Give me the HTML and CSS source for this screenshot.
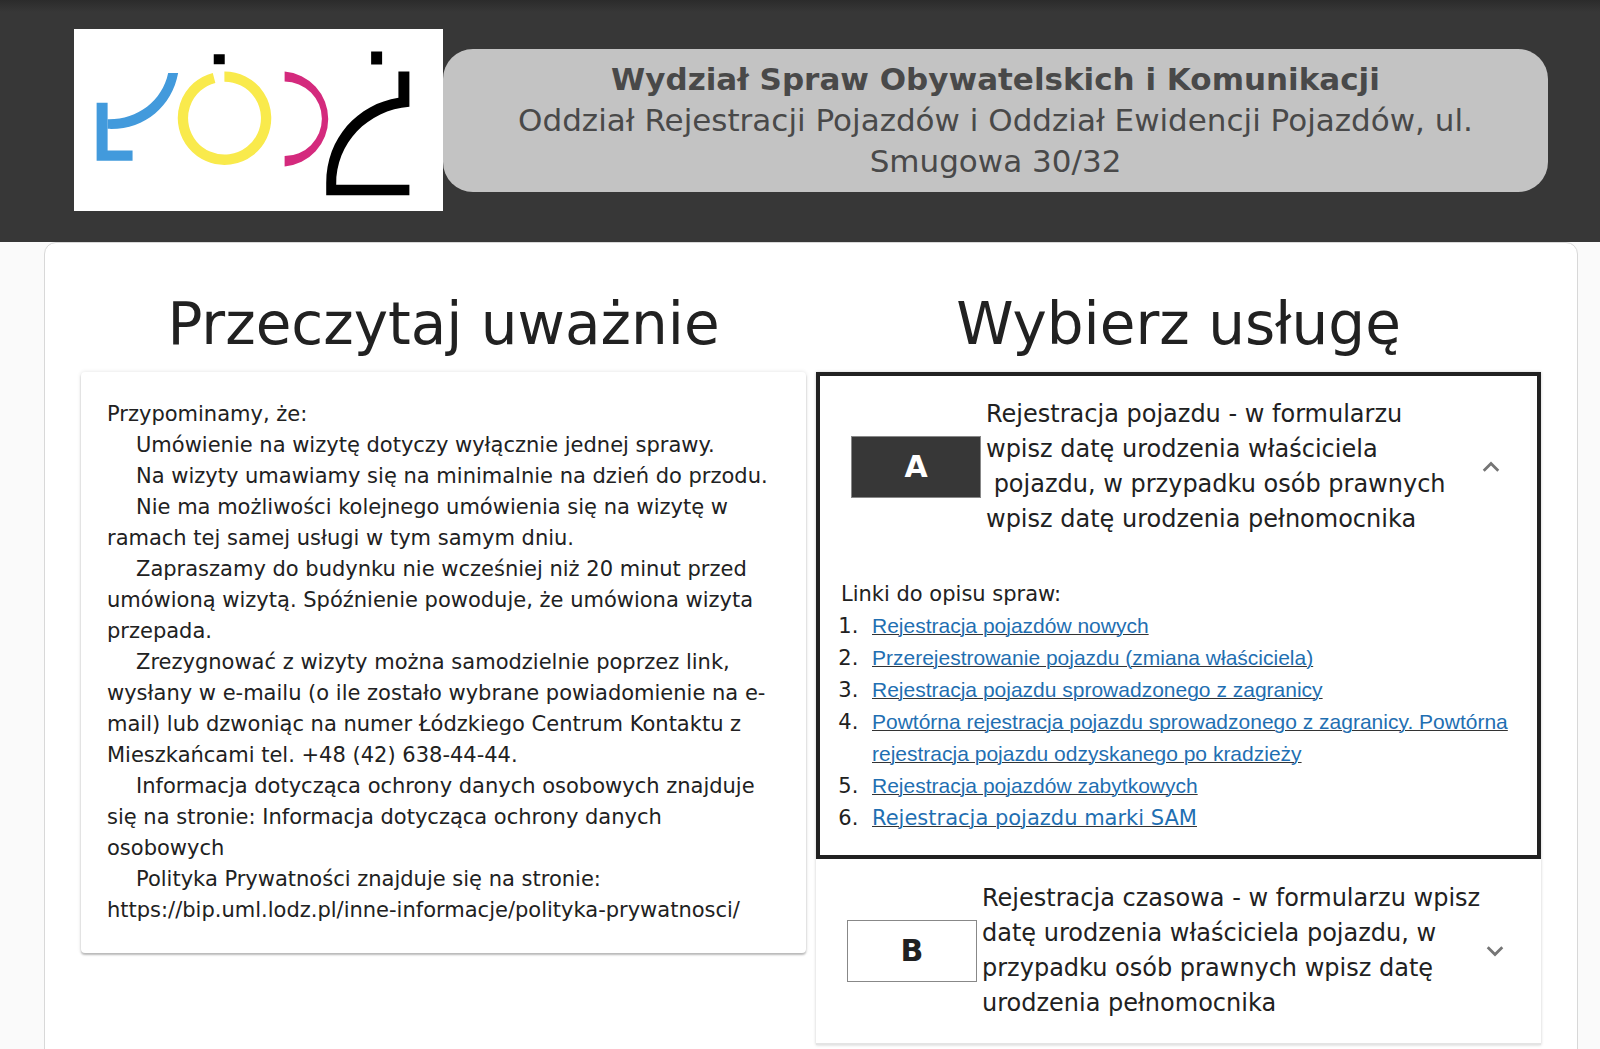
FILE: index.html
```html
<!DOCTYPE html>
<html lang="pl">
<head>
    <meta charset="UTF-8">
    <meta name="viewport" content="width=device-width, initial-scale=1.0">
    <title>Rezerwacja wizyt</title>
    <link rel="stylesheet" href="styles.css">
</head>
<body>
    <header class="header">
        <svg class="logo" viewBox="42 88 1109 545" role="img" aria-label="Łódź">
            <g fill="#429adc">
                <path d="M110 309H143V452H218V483H110Z"/>
                <path d="M143 358C230 360 307 305 325 219H355C336 322 250 392 143 387Z"/>
            </g>
            <path d="M494 230A125 125 0 1 1 463 234" fill="none" stroke="#f9ea4c" stroke-width="31"/>
            <path d="M675 215A143 143 0 0 1 675 500V469A112 112 0 0 0 675 245Z" fill="#d42a7d"/>
            <path d="M462 163H495V193H462ZM935 155H968V194H935Z"/>
            <path d="M1017 215H1050V321C925 331 829 430 830 555H1050V587H800V550C800 415 895 313 1017 294Z"/>
        </svg>
        <div class="department">
            <strong>Wydział Spraw Obywatelskich i Komunikacji</strong><br>
            Oddział Rejestracji Pojazdów i Oddział Ewidencji Pojazdów, ul. Smugowa 30/32
        </div>
    </header>

    <main class="content">
        <section class="column">
            <h1>Przeczytaj uważnie</h1>
            <div class="info-card">
                <p class="intro">Przypominamy, że:</p>
                <p>Umówienie na wizytę dotyczy wyłącznie jednej sprawy.</p>
                <p>Na wizyty umawiamy się na minimalnie na dzień do przodu.</p>
                <p>Nie ma możliwości kolejnego umówienia się na wizytę w ramach tej samej usługi w tym samym dniu.</p>
                <p>Zapraszamy do budynku nie wcześniej niż 20 minut przed umówioną wizytą. Spóźnienie powoduje, że umówiona wizyta przepada.</p>
                <p>Zrezygnować z wizyty można samodzielnie poprzez link, wysłany w e-mailu (o ile zostało wybrane powiadomienie na e-mail) lub dzwoniąc na numer Łódzkiego Centrum Kontaktu z Mieszkańcami tel. +48 (42) 638-44-44.</p>
                <p>Informacja dotycząca ochrony danych osobowych znajduje się na stronie: <a href="#">Informacja dotycząca ochrony danych osobowych</a></p>
                <p>Polityka Prywatności znajduje się na stronie: <a href="#">https://bip.uml.lodz.pl/inne-informacje/polityka-prywatnosci/</a></p>
            </div>
        </section>

        <section class="column">
            <h1>Wybierz usługę</h1>
            <div class="services">
                <div class="service open">
                    <button class="service-header" type="button" aria-expanded="true">
                        <span class="letter">A</span>
                        <span class="service-name">Rejestracja pojazdu - w formularzu<br>wpisz datę urodzenia właściciela<br>&nbsp;pojazdu, w przypadku osób prawnych wpisz datę urodzenia pełnomocnika</span>
                        <svg class="arrow" viewBox="4 4 16 16"><path d="M12 8l-6 6 1.41 1.41L12 10.83l4.59 4.58L18 14z"/></svg>
                    </button>
                    <div class="service-body">
                        <p>Linki do opisu spraw:</p>
                        <ol>
                            <li><a href="#">Rejestracja pojazdów nowych</a></li>
                            <li><a href="#">Przerejestrowanie pojazdu (zmiana właściciela)</a></li>
                            <li><a href="#">Rejestracja pojazdu sprowadzonego z zagranicy</a></li>
                            <li><a href="#">Powtórna rejestracja pojazdu sprowadzonego z zagranicy. Powtórna rejestracja pojazdu odzyskanego po kradzieży</a></li>
                            <li><a href="#">Rejestracja pojazdów zabytkowych</a></li>
                            <li><a class="wide" href="#">Rejestracja pojazdu marki SAM</a></li>
                        </ol>
                    </div>
                </div>
                <div class="service">
                    <button class="service-header" type="button" aria-expanded="false">
                        <span class="letter">B</span>
                        <span class="service-name">Rejestracja czasowa - w formularzu wpisz datę urodzenia właściciela pojazdu, w przypadku osób prawnych wpisz datę urodzenia pełnomocnika</span>
                        <svg class="arrow" viewBox="4 4 16 16"><path d="M16.59 8.59L12 13.17 7.41 8.59 6 10l6 6 6-6z"/></svg>
                    </button>
                </div>
            </div>
        </section>
    </main>
</body>
</html>
```

FILE: styles.css
```css
* {
    box-sizing: border-box;
}
body {
    margin: 0;
    font-family: Verdana, "DejaVu Sans", sans-serif;
    color: #212121;
    background: #fafafa;
}
h1, p, ol {
    margin: 0;
}
.header {
    display: flex;
    align-items: center;
    padding: 29px 52px 31px 74px;
    background: linear-gradient(#2b2b2b, #373737 12px);
}
.logo {
    flex: none;
    width: 369px;
    height: 182px;
    background: #fff;
}
.department {
    flex: 1;
    padding: 10px 40px;
    border-radius: 30px;
    background: #c3c3c3;
    color: #494949;
    font-size: 31px;
    line-height: 41px;
    text-align: center;
}
.content {
    display: flex;
    gap: 10px;
    margin: 0 22px 0 44px;
    padding: 45px 36px;
    border: 1px solid #d8d8d8;
    border-radius: 12px;
    background: #fff;
}
.column {
    flex: 1;
    min-width: 0;
}
h1 {
    padding-bottom: 11px;
    font-size: 58px;
    font-weight: normal;
    line-height: 73px;
    text-align: center;
}
.info-card {
    padding: 27px 26px;
    border-radius: 4px;
    box-shadow: 0 2px 2px rgba(0, 0, 0, 0.24), 0 0 4px rgba(0, 0, 0, 0.12);
    font-size: 21px;
    line-height: 31px;
}
.info-card p {
    text-indent: 29px;
}
.info-card .intro {
    text-indent: 0;
}
.info-card a {
    color: inherit;
    text-decoration: none;
}
.services {
    box-shadow: 0 0 3px rgba(0, 0, 0, 0.2);
}
.service {
    border-bottom: 2px solid #e4e4e4;
}
.service.open {
    border: 4px solid #212121;
}
.service-header {
    display: flex;
    align-items: center;
    width: 100%;
    padding: 22px 35px 22px 31px;
    border: none;
    background: none;
    color: #212121;
    font: inherit;
    text-align: left;
    cursor: pointer;
}
.letter {
    flex: none;
    width: 130px;
    margin-right: 5px;
    border: 1px solid #888;
    font-size: 30px;
    font-weight: bold;
    line-height: 60px;
    text-align: center;
}
.open .letter {
    background: #373737;
    color: #fff;
}
.service-name {
    flex: 1;
    font-size: 24px;
    line-height: 35px;
}
.arrow {
    flex: none;
    width: 22px;
    height: 22px;
    fill: #757575;
}
.open .service-header {
    padding-top: 21px;
}
.service-body {
    padding: 19px 21px 21px;
    font-size: 21px;
    line-height: 32px;
}
.service-body ol {
    padding-left: 24px;
}
.service-body li {
    padding-left: 7px;
}
.service-body a {
    color: #1f6fb2;
    font-family: "Liberation Sans", Arial, sans-serif;
    text-decoration-color: #333;
    text-decoration-thickness: 1px;
}
.service-body a.wide {
    font-family: inherit;
}
```
